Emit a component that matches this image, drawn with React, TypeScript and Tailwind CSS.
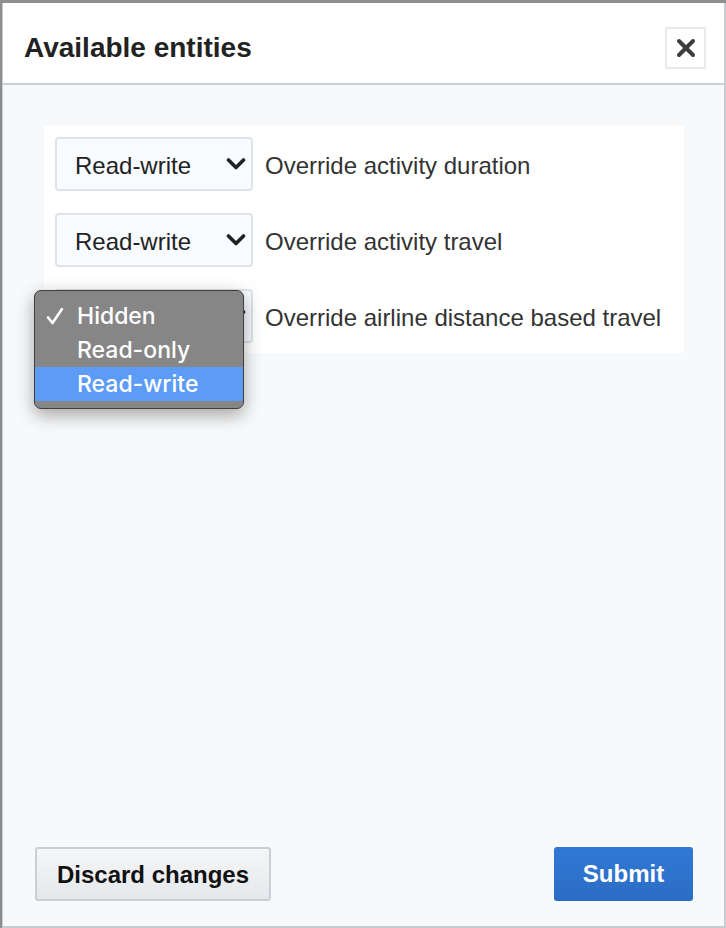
import React from "react";

const rows = [
  { value: "Read-write", label: "Override activity duration" },
  { value: "Read-write", label: "Override activity travel" },
  { value: "", label: "Override airline distance based travel", open: true },
];

function Chevron() {
  return (
    <svg width="20" height="14" viewBox="0 0 20 14" className="text-[#222]">
      <polyline points="2.5,3 10,10.5 17.5,3" fill="none" stroke="currentColor" strokeWidth="3.6" strokeLinecap="round" strokeLinejoin="round" />
    </svg>
  );
}

function Menu() {
  const items = ["Hidden", "Read-only", "Read-write"];
  return (
    <div className="absolute left-[-21px] top-[1px] z-10 w-[210px] rounded-[7px] border border-[#3f3f3f] bg-[#868686] pt-[8px] pb-[7px] shadow-[0_6px_18px_rgba(0,0,0,0.35)] font-['Inter',sans-serif] text-[23px] font-medium text-white">
      {items.map((it, i) => (
        <div
          key={it}
          className={
            "relative flex h-[34px] items-center pl-[42px] " + (i === 2 ? "bg-[#5d9cf6]" : "")
          }
        >
          {i === 0 && (
            <svg width="18" height="19" viewBox="0 0 18 19" className="absolute left-[11px] top-[8px]">
              <path d="M2 10.5 L6.5 16 L16 2" fill="none" stroke="white" strokeWidth="2.6" strokeLinecap="round" strokeLinejoin="round" />
            </svg>
          )}
          {it}
        </div>
      ))}
    </div>
  );
}

export default function App() {
  return (
    <div className="h-[928px] w-[726px] bg-[#8e8e8e] pt-[3px] pl-[2px] font-['Liberation_Sans',Arial,sans-serif]">
      <div className="flex h-[925px] w-[724px] flex-col border-l border-r-2 border-b-2 border-[#c5ccd3] bg-[#f8f9fa]">
        <div className="flex h-[82px] items-center justify-between border-b-2 border-[#c9d0d7] bg-white pt-[9px] pl-[21px] pr-[18px]">
          <h1 className="text-[28px] font-bold text-[#222]">Available entities</h1>
          <button className="flex h-[42px] w-[41px] items-center justify-center border-2 border-[#ebebeb] bg-white">
            <svg width="20" height="20" viewBox="0 0 20 20">
              <path d="M3 3 L17 17 M17 3 L3 17" stroke="#3d3d3d" strokeWidth="4" strokeLinecap="round" />
            </svg>
          </button>
        </div>

        <div className="flex-1 px-[41px] pt-[41px]">
          <div className="flex w-[640px] flex-col gap-[22px] bg-white px-[11px] pt-[11px] pb-[10px]">
            {rows.map((r) => (
              <div key={r.label} className="relative flex items-center gap-[12px]">
                <div className="flex h-[54px] w-[198px] items-center justify-between rounded-[4px] border-2 border-[#e0e4e8] bg-[#f8fbff] pl-[18px] pr-[5px] text-[24px] text-[#222]">
                  <span className="pt-[3px]">{r.value}</span>
                  <Chevron />
                </div>
                <span className="pt-[3px] text-[24px] text-[#333]">{r.label}</span>
                {r.open && <Menu />}
              </div>
            ))}
          </div>
        </div>

        <div className="flex items-center justify-between pb-[25px] pl-[32px] pr-[31px]">
          <button className="h-[54px] w-[236px] rounded-[3px] border-2 border-[#c8cfd6] bg-gradient-to-b from-[#f5f6f7] to-[#e5e8eb] pt-[1px] text-[24px] font-bold text-[#111]">
            Discard changes
          </button>
          <button className="h-[54px] w-[139px] rounded-[3px] bg-gradient-to-b from-[#3179d4] to-[#2b6dc6] text-[24px] font-bold text-white">
            Submit
          </button>
        </div>
      </div>
    </div>
  );
}
